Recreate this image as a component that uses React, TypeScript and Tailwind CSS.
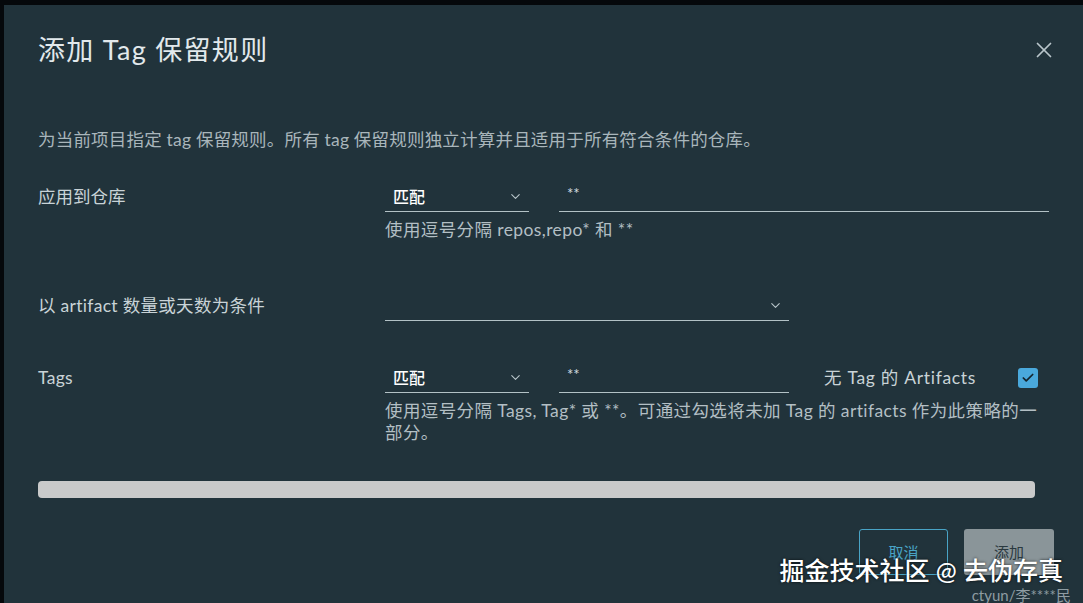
import { X, ChevronDown, Check } from 'lucide-react';

const font = { fontFamily: 'Lato, "Noto Sans CJK SC", sans-serif' };

function Select({ value, width }: { value?: string; width: string }) {
  return (
    <div className={`flex h-[30px] items-center justify-between border-b border-[#b3c2c6] pl-[8px] pr-[6px] ${width}`}>
      <span className="text-[16px] font-medium text-white">{value}</span>
      <ChevronDown className="h-[15px] w-[15px] text-[#b8c5ca]" strokeWidth={1.75} />
    </div>
  );
}

function Input({ value, width }: { value: string; width: string }) {
  return (
    <div className={`flex h-[30px] items-center border-b border-[#b3c2c6] pl-[8px] ${width}`}>
      <span className="-mt-[6px] text-[15px] text-[#d4dde0]">{value}</span>
    </div>
  );
}

export default function App() {
  return (
    <div className="h-[603px] overflow-hidden bg-[#05080b] pl-[4px] pt-[5px]" style={font}>
      <div className="relative h-full bg-[#21333b] pl-[34px]">
        <div className="flex items-center justify-between pr-[26px] pt-[29px]">
          <h1 className="text-[27px] leading-[32px] tracking-[1.3px] text-[#e2e9ec]">添加 Tag 保留规则</h1>
          <X className="h-[26px] w-[26px] text-[#b9c6cb]" strokeWidth={1.6} />
        </div>

        <p className="mt-[63px] text-[17.5px] leading-[22px] tracking-[0.2px] text-[#a9b6bb]">
          为当前项目指定 tag 保留规则。所有 tag 保留规则独立计算并且适用于所有符合条件的仓库。
        </p>

        {/* repositories */}
        <div className="mt-[31px] flex">
          <div className="flex h-[30px] w-[347px] items-center text-[17.5px] text-[#c9d3d7]">应用到仓库</div>
          <div>
            <div className="flex gap-[30px]">
              <Select value="匹配" width="w-[144px]" />
              <Input value="**" width="w-[490px]" />
            </div>
            <p className="mt-[8px] text-[17.5px] leading-[20px] tracking-[0.4px] text-[#b3bfc4]">使用逗号分隔 repos,repo* 和 **</p>
          </div>
        </div>

        {/* artifact count / days */}
        <div className="mt-[51px] flex">
          <div className="flex h-[30px] w-[347px] items-center text-[17.5px] tracking-[0.3px] text-[#c9d3d7]">以 artifact 数量或天数为条件</div>
          <Select width="w-[404px]" />
        </div>

        {/* tags */}
        <div className="mt-[42px] flex">
          <div className="flex h-[30px] w-[347px] items-center text-[17.5px] tracking-[0.3px] text-[#c9d3d7]">Tags</div>
          <div className="w-[664px]">
            <div className="flex items-center">
              <Select value="匹配" width="w-[144px]" />
              <div className="ml-[30px]">
                <Input value="**" width="w-[230px]" />
              </div>
              <span className="ml-[35px] text-[17.5px] tracking-[0.7px] text-[#c9d3d7]">无 Tag 的 Artifacts</span>
              <div className="ml-auto mr-[11px] flex h-[20px] w-[20px] items-center justify-center rounded-[3px] bg-[#4aa9dc]">
                <Check className="h-[14px] w-[14px] text-[#15252d]" strokeWidth={3} />
              </div>
            </div>
            <p className="mt-[7px] text-[17.5px] leading-[22px] tracking-[0.4px] text-[#b3bfc4]">
              使用逗号分隔 Tags, Tag* 或 **。可通过勾选将未加 Tag 的 artifacts 作为此策略的一部分。
            </p>
          </div>
        </div>

        <div className="mt-[37px] mr-[48px] h-[17px] rounded-[4px] bg-[#c9caca]" />

        <div className="mt-[31px] flex justify-end gap-[16px] pr-[29px]">
          <button className="h-[46px] w-[89px] rounded-[3px] border border-[#49a4c6] text-[15px] text-[#49a4c6]">取消</button>
          <button className="h-[46px] w-[90px] rounded-[3px] bg-[#8a9599] text-[15px] text-[#2a393f]">添加</button>
        </div>

        <div className="absolute right-[20px] top-[547px] text-[25px] font-medium text-white [text-shadow:0_0_3px_rgba(0,0,0,0.8)]">
          掘金技术社区 @ 去伪存真
        </div>
        <div className="absolute right-[12px] top-[579px] text-[15px] text-[#8e9ca2]">ctyun/李****民</div>
      </div>
    </div>
  );
}
